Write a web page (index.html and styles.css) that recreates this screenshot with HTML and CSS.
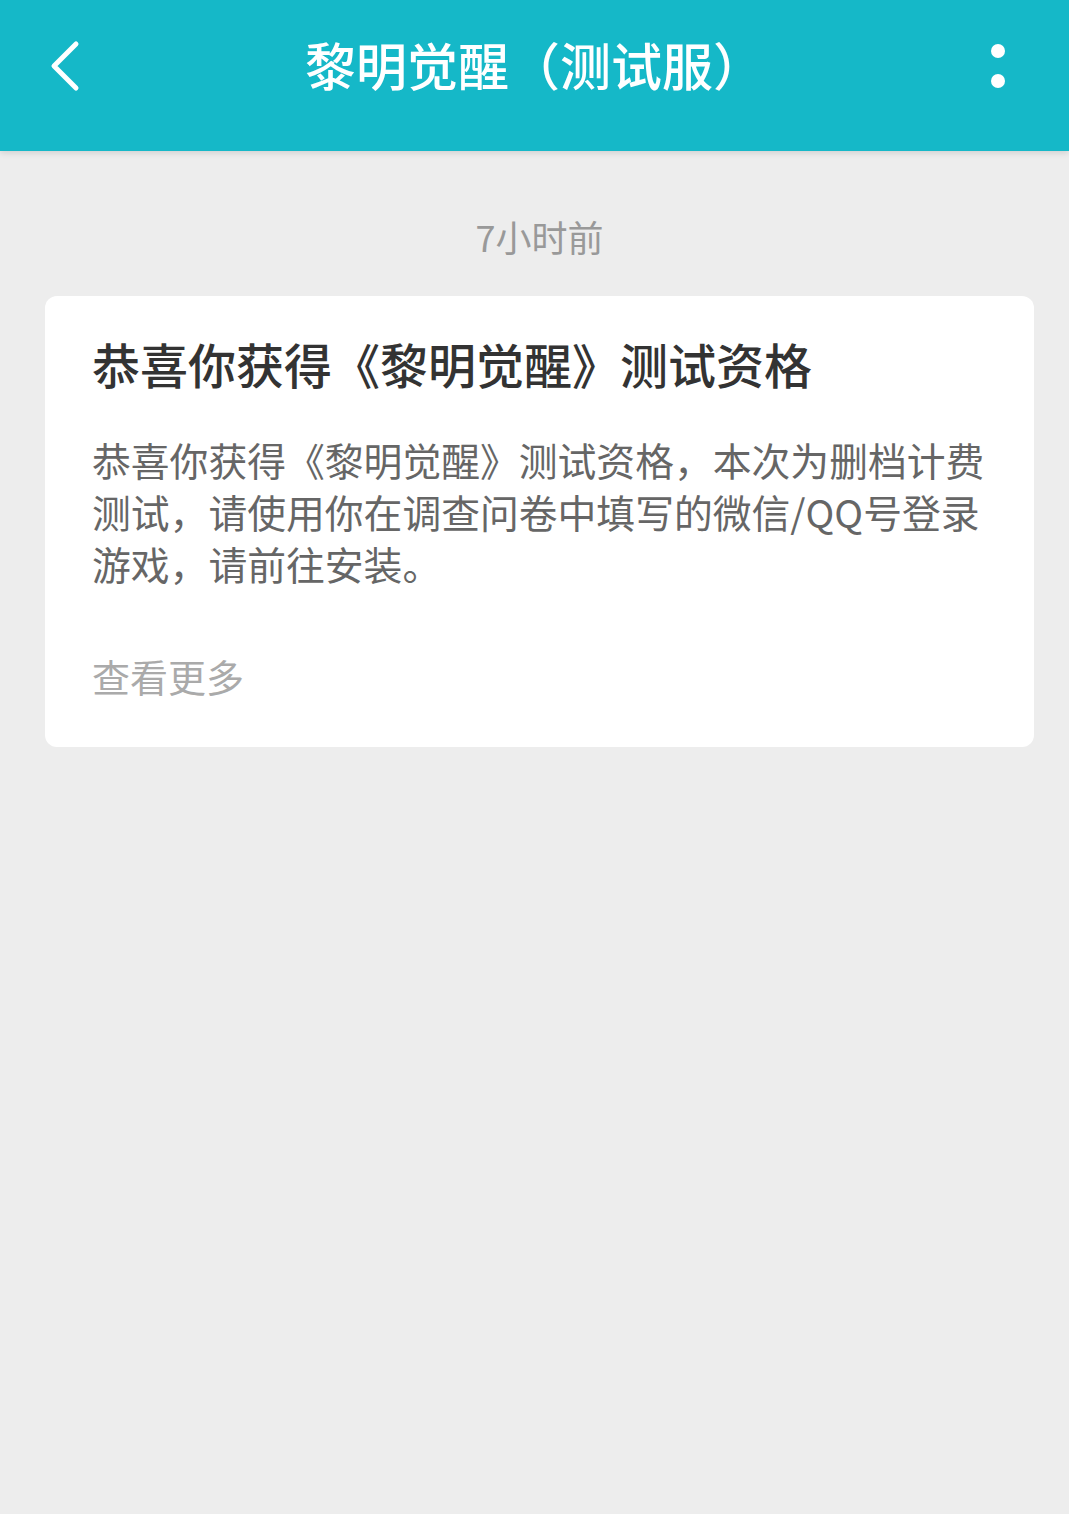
FILE: index.html
```html
<!DOCTYPE html>
<html lang="zh-CN">
<head>
  <meta charset="UTF-8">
  <meta name="viewport" content="width=device-width, initial-scale=1.0">
  <title>黎明觉醒（测试服）</title>
  <link rel="stylesheet" href="styles.css">
</head>
<body>
  <div class="top-bar">
    <div class="back-btn">
      <svg width="40" height="60" viewBox="0 0 40 60">
        <polyline points="30,8 8,30 30,52" fill="none" stroke="#fff" stroke-width="5" stroke-linecap="round" stroke-linejoin="round"/>
      </svg>
    </div>
    <div class="top-title">黎明觉醒（测试服）</div>
    <div class="more-btn">
      <span class="dot"></span>
      <span class="dot"></span>
    </div>
  </div>

  <div class="msg-list">
    <div class="msg-time">7小时前</div>
    <div class="msg-card">
      <div class="msg-title">恭喜你获得《黎明觉醒》测试资格</div>
      <div class="msg-body">恭喜你获得《黎明觉醒》测试资格，本次为删档计费测试，请使用你在调查问卷中填写的微信/QQ号登录游戏，请前往安装。</div>
      <div class="msg-more">查看更多</div>
    </div>
  </div>
</body>
</html>
```

FILE: styles.css
```css
body {
  font-family: "Noto Sans CJK SC", "Noto Sans", sans-serif;
  background-color: #ededed;
  margin: 0;
  padding: 0;
  min-height: 100vh;
}
.top-bar {
  height: 151px;
  background-color: #15b8c8;
  display: flex;
  align-items: center;
  justify-content: space-between;
  padding: 0 46px 20px 46px;
  box-sizing: border-box;
  box-shadow: 0 2px 6px rgba(0, 0, 0, 0.12);
  position: relative;
}
.back-btn {
  width: 80px;
  display: flex;
  align-items: center;
}
.top-title {
  color: #fff;
  font-size: 51px;
  font-weight: 500;
  letter-spacing: 0;
  line-height: 60px;
  position: relative;
  top: -2px;
}
.more-btn {
  width: 80px;
  display: flex;
  flex-direction: column;
  align-items: flex-end;
  gap: 16px;
}
.dot {
  width: 14px;
  height: 14px;
  border-radius: 50%;
  background-color: #fff;
  margin-right: 18px;
}
.msg-list {
  padding: 0 35px 0 45px;
}
.msg-time {
  text-align: center;
  color: #999;
  font-size: 36px;
  padding-top: 62px;
  height: 83px;
  line-height: 46px;
}
.msg-card {
  background-color: #fff;
  border-radius: 12px;
  padding: 35px 47px 45px 47px;
}
.msg-title {
  font-size: 48px;
  font-weight: 500;
  color: #333;
  line-height: 64px;
}
.msg-body {
  margin-top: 38px;
  font-size: 38.8px;
  color: #666;
  line-height: 52px;
}
.msg-more {
  margin-top: 61px;
  font-size: 38px;
  color: #aaa;
  line-height: 52px;
}
```
